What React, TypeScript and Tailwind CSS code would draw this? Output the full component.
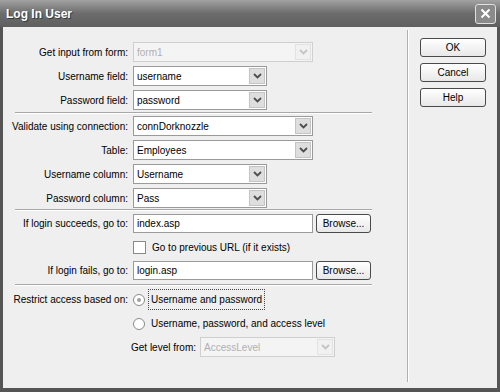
import React from "react";

// Windows XP style "Log In User" dialog (grayscale)

function Chevron({ faint }: { faint?: boolean }) {
  return (
    <svg width="9" height="6" viewBox="0 0 9 6">
      <path d="M1 1 L4.5 4.5 L8 1" fill="none" stroke={faint ? "#c4c4c4" : "#4d4d4d"} strokeWidth="1.8" />
    </svg>
  );
}

function Select({ value, width, disabled }: { value: string; width: string; disabled?: boolean }) {
  return (
    <div
      className={`flex h-[20px] items-center border ${width} ${
        disabled ? "border-[#cfcfcf] bg-[#f4f4f4] text-[#b0b0b0]" : "border-[#9a9a9a] bg-white text-black"
      }`}
    >
      <span className="flex-1 truncate pl-[3px]">{value}</span>
      <div
        className={`m-[1px] flex h-[16px] w-[16px] items-center justify-center border ${
          disabled ? "border-[#e2e2e2] bg-[#f1f1f1]" : "border-[#c4c4c4] bg-[#dedede]"
        }`}
      >
        <Chevron faint={disabled} />
      </div>
    </div>
  );
}

function TextBox({ value }: { value: string }) {
  return (
    <div className="flex h-[19px] w-[180px] items-center border border-[#9a9a9a] bg-white pl-[3px]">
      {value}
    </div>
  );
}

function Button({ label, width }: { label: string; width: string }) {
  return (
    <div
      className={`flex h-[19px] items-center justify-center rounded-[3px] border border-[#4a4a4a] bg-gradient-to-b from-white to-[#e8e8e8] ${width}`}
    >
      {label}
    </div>
  );
}

function Row({ label, children, className }: { label: string; children: React.ReactNode; className?: string }) {
  return (
    <div className={`flex items-center ${className ?? ""}`}>
      <div className="flex w-[113px] justify-end whitespace-nowrap text-right">{label}</div>
      <div className="ml-[5px] flex items-center gap-[3px]">{children}</div>
    </div>
  );
}

function Separator({ className }: { className?: string }) {
  return <div className={`h-[2px] w-[357px] border-t border-b border-t-[#a8a8a8] border-b-white ${className ?? ""}`} />;
}

function Radio({ checked }: { checked?: boolean }) {
  return (
    <div className="flex h-[12px] w-[12px] items-center justify-center rounded-full border border-[#8a8a8a] bg-white">
      {checked && <div className="h-[4px] w-[4px] rounded-full bg-[#a0a0a0]" />}
    </div>
  );
}

export default function App() {
  return (
    <div className="flex h-[392px] w-[500px] flex-col bg-[#555555] font-['Liberation_Sans',Arial,sans-serif] text-[10px] text-black">
      {/* title bar */}
      <div className="flex h-[27px] items-center justify-between bg-gradient-to-b from-[#a2a2a2] via-[#6c6c6c] to-[#5f5f5f] pl-[6px] pr-[4px]">
        <span className="text-[12px] font-bold text-white [text-shadow:1px_1px_0_#3a3a3a]">Log In User</span>
        <div className="flex h-[20px] w-[21px] items-center justify-center rounded-[3px] border border-[#e0e0e0] bg-[#8a8a8a]">
          <svg width="11" height="11" viewBox="0 0 11 11">
            <path d="M1.5 1.5 L9.5 9.5 M9.5 1.5 L1.5 9.5" stroke="white" strokeWidth="2" />
          </svg>
        </div>
      </div>

      <div className="mx-[3px] mb-[4px] flex flex-1 bg-[#efefef]">
        {/* left form */}
        <div className="w-[404px] pl-[12px] pt-[15px]">
          <Row label="Get input from form:">
            <Select value="form1" width="w-[180px]" disabled />
          </Row>
          <Row label="Username field:" className="mt-[4px]">
            <Select value="username" width="w-[134px]" />
          </Row>
          <Row label="Password field:" className="mt-[4px]">
            <Select value="password" width="w-[134px]" />
          </Row>
          <Separator className="mt-[2px]" />

          <Row label="Validate using connection:" className="mt-[2px]">
            <Select value="connDorknozzle" width="w-[180px]" />
          </Row>
          <Row label="Table:" className="mt-[4px]">
            <Select value="Employees" width="w-[180px]" />
          </Row>
          <Row label="Username column:" className="mt-[4px]">
            <Select value="Username" width="w-[134px]" />
          </Row>
          <Row label="Password column:" className="mt-[4px]">
            <Select value="Pass" width="w-[134px]" />
          </Row>
          <Separator className="mt-[1px]" />

          <Row label="If login succeeds, go to:" className="mt-[3px]">
            <TextBox value="index.asp" />
            <Button label="Browse..." width="w-[55px]" />
          </Row>
          <Row label="" className="mt-[7px] h-[14px]">
            <div className="h-[13px] w-[13px] border border-[#8a8a8a] bg-white" />
            <span className="ml-[3px]">Go to previous URL (if it exists)</span>
          </Row>
          <Row label="If login fails, go to:" className="mt-[7px]">
            <TextBox value="login.asp" />
            <Button label="Browse..." width="w-[55px]" />
          </Row>
          <Separator className="mt-[4px]" />

          <Row label="Restrict access based on:" className="mt-[3px]">
            <Radio checked />
            <span className="border border-dotted border-[#444] px-[2px] py-[2px]">Username and password</span>
          </Row>
          <Row label="" className="mt-[6px]">
            <Radio />
            <span className="ml-[3px]">Username, password, and access level</span>
          </Row>
          <div className="mt-[6px] flex items-center pl-[116px]">
            <span className="whitespace-nowrap">Get level from:</span>
            <div className="ml-[4px]">
              <Select value="AccessLevel" width="w-[135px]" disabled />
            </div>
          </div>
        </div>

        {/* vertical separator */}
        <div className="mt-[3px] mb-[6px] w-[2px] border-l border-r border-l-[#b0b0b0] border-r-white" />

        {/* right buttons */}
        <div className="flex flex-col gap-[6px] pl-[11px] pt-[11px]">
          <Button label="OK" width="w-[66px]" />
          <Button label="Cancel" width="w-[66px]" />
          <Button label="Help" width="w-[66px]" />
        </div>
      </div>
    </div>
  );
}
